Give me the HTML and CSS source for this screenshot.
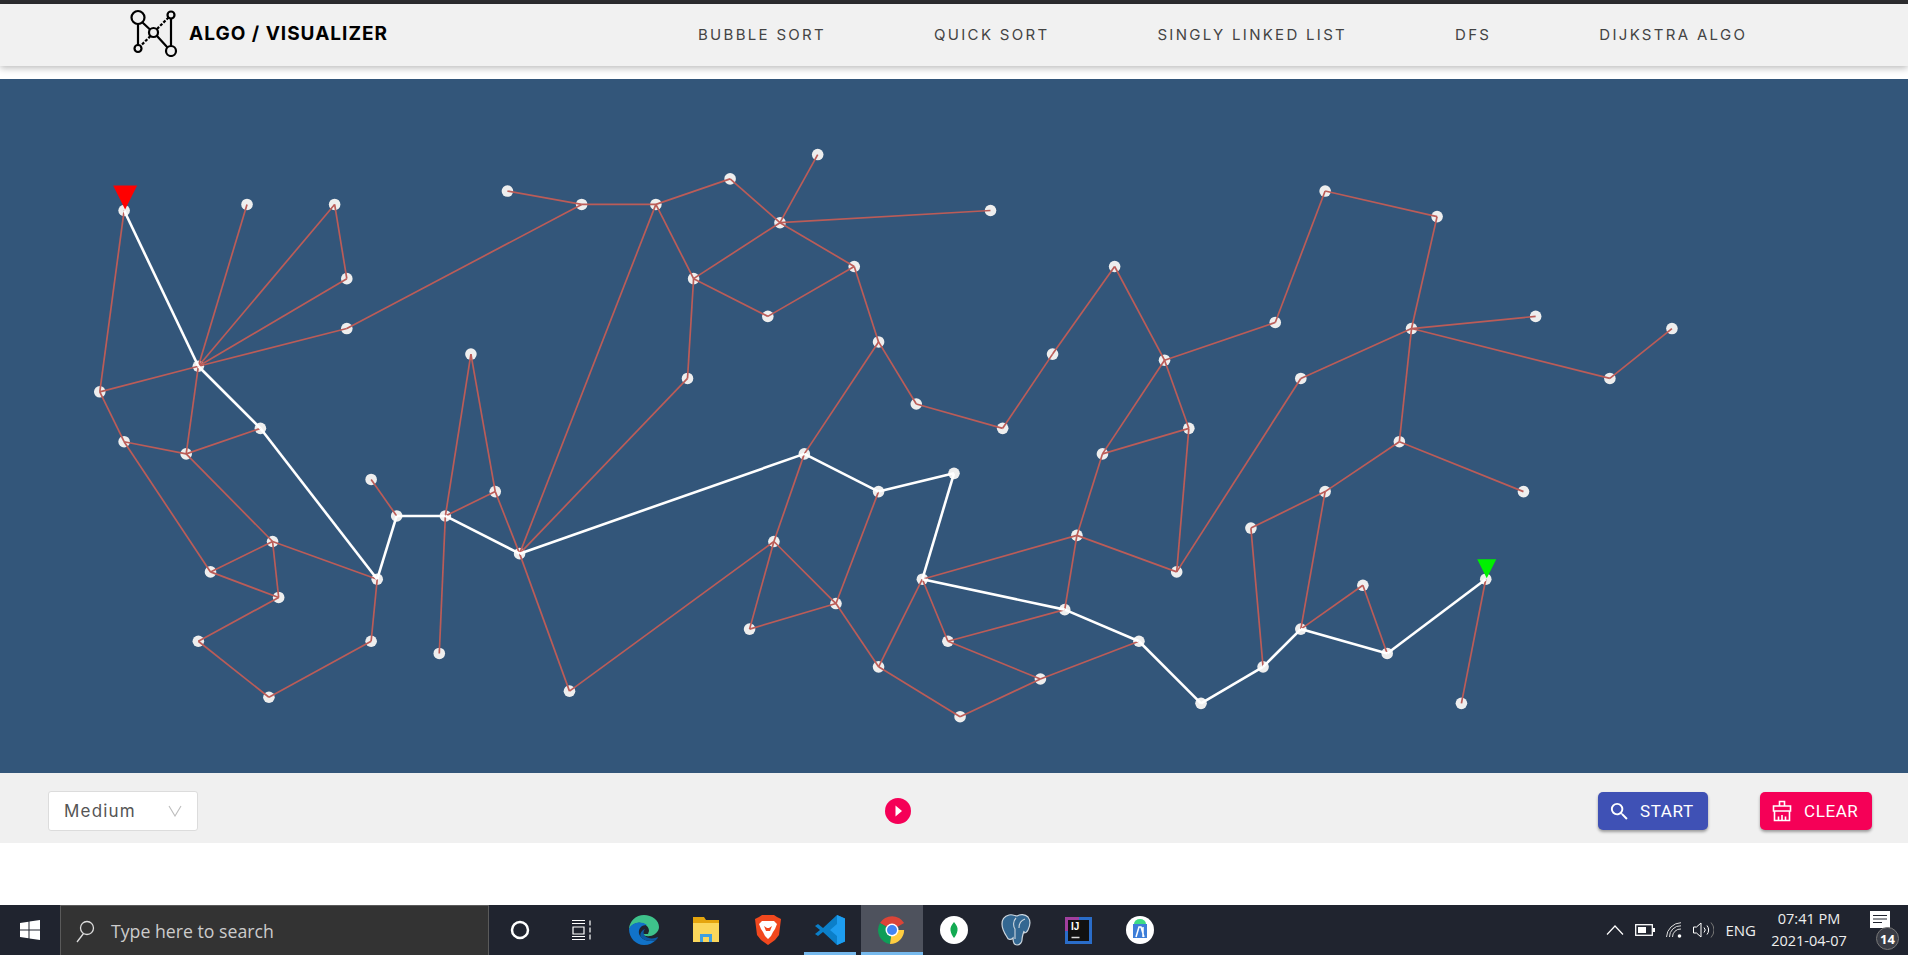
FILE: index.html
```html
<!DOCTYPE html>
<html lang="en">
<head>
    <meta charset="UTF-8">
    <title>Algo Visualizer</title>
    <link rel="stylesheet" href="styles.css">
</head>
<body>

<div class="top-strip"></div>

<!-- Header -->
<header class="header">
    <a class="brand">
        <svg class="brand-logo" width="48" height="48" viewBox="0 0 48 48" fill="none" stroke="#000" stroke-width="2.2">
            <circle cx="8" cy="8.500" r="6.500"/>
            <circle cx="41" cy="6" r="3.500"/>
            <circle cx="23.500" cy="23.500" r="4.500"/>
            <circle cx="8" cy="39.500" r="3.500"/>
            <circle cx="41" cy="42" r="5"/>
            <path d="M12.500 13.500L20 20.500M27 27L37.500 38.500M41 9.500V37M8 15V36"/>
            <path d="M27 20L38.500 8.500M20.500 27L10.500 37" stroke-dasharray="3 1.500"/>
        </svg>
        <span class="brand-name">ALGO / VISUALIZER</span>
    </a>
    <nav class="nav">
        <a>BUBBLE SORT</a>
        <a>QUICK SORT</a>
        <a>SINGLY LINKED LIST</a>
        <a>DFS</a>
        <a>DIJKSTRA ALGO</a>
    </nav>
</header>

<!-- Graph canvas, filled in by graph.js -->
<main class="canvas">
    <svg id="graph" class="graph" width="1908" height="694"></svg>
</main>

<!-- Controls -->
<div class="controls">
    <div class="speed-select">
        <span>Medium</span>
        <svg width="14" height="12" viewBox="0 0 14 12" fill="none" stroke="#bdbdbd" stroke-width="1.100"><path d="M1 1L7 11L13 1"/></svg>
    </div>
    <button class="play-btn">
        <svg width="26" height="26" viewBox="0 0 26 26"><circle cx="13" cy="13" r="13" fill="#f50057"/><path d="M10.500 7.500L17 13L10.500 18.500Z" fill="#fff"/></svg>
    </button>
    <button class="btn btn-start">
        <svg width="23" height="23" viewBox="0 0 24 24" fill="#fff"><path d="M15.500 14h-.79l-.28-.27A6.470 6.470 0 0 0 16 9.500 6.500 6.500 0 1 0 9.500 16c1.610 0 3.090-.59 4.230-1.570l.27.28v.79l5 4.990L20.490 19l-4.990-5zm-6 0C7.010 14 5 11.990 5 9.500S7.010 5 9.500 5 14 7.010 14 9.500 11.990 14 9.500 14z"/></svg>
        START
    </button>
    <button class="btn btn-clear">
        <svg width="22" height="22" viewBox="0 0 22 22" fill="none" stroke="#fff" stroke-width="1.600"><path d="M8.500 6V1.500h5V6M2.500 6h17v5h-17zM3.500 11v9.500h15V11M7.500 20.500v-4M11 20.500v-5.500M14.500 20.500v-4"/></svg>
        CLEAR
    </button>
</div>

<div class="spacer"></div>

<!-- Windows taskbar -->
<footer class="taskbar">
    <div class="start-slot">
        <svg width="20" height="20" viewBox="0 0 20 20" fill="#fff"><path d="M0 3l8.500-1.300v7.800H0zM9.500 1.500L20 0v9.500H9.500zM0 10.500h8.500v7.800L0 17zM9.500 10.500H20V20L9.500 18.500z"/></svg>
    </div>
    <div class="search-box">
        <svg width="20" height="24" viewBox="0 0 20 24" fill="none" stroke="#ddd" stroke-width="1.300"><circle cx="12" cy="9" r="6.500"/><path d="M8.500 14.500L2 23"/></svg>
        <span>Type here to search</span>
    </div>
    <div class="slot">
        <svg width="20" height="20" viewBox="0 0 20 20" fill="none" stroke="#fff" stroke-width="2.500"><circle cx="10" cy="10" r="8"/></svg>
    </div>
    <div class="slot">
        <svg width="22" height="20" viewBox="0 0 22 20" fill="none" stroke="#fff" stroke-width="1.200"><path d="M1 .5h13M1 3.500h13M2 7h11v7H2zM1 16.500h13M1 19.500h13M19 .5v5M19 7.500v5M19 14.500v5"/></svg>
    </div>
    <div class="slot">
        <!-- edge -->
        <svg width="30" height="30" viewBox="0 0 30 30">
            <path d="M15 0C7 0 .5 6 0 14c3-5 8-7 12-6 5 1 8 4 8 8l-1 3h-6c3 3 9 3 13 0 3-2 4-5 4-7C30 5 23 0 15 0z" fill="#3ec28b"/>
            <path d="M0 14c0 9 7 16 15 16 5 0 9-2 12-5-5 2-12 1-15-3-3-3-3-8 1-11 2-1 4-1 5-1-6-5-16-2-18 4z" fill="#1173c9"/>
            <path d="M12 22c3 4 10 5 15 3 1-1 2-2 2-3-4 2-10 2-13-1-2-2-2-5 0-7-3 1-6 5-4 8z" fill="#0c59a4"/>
        </svg>
    </div>
    <div class="slot">
        <!-- explorer -->
        <svg width="28" height="28" viewBox="0 0 28 28">
            <path d="M1 1h11l2 3h13v22H1z" fill="#e5a50d"/>
            <path d="M1 7h26v19H1z" fill="#fbd75b"/>
            <path d="M8 18h12v8h-3v-5h-6v5H8z" fill="#3f9fe0"/>
        </svg>
    </div>
    <div class="slot">
        <!-- brave -->
        <svg width="26" height="30" viewBox="0 0 26 30">
            <path d="M7 0h12l3 2 4 2-1 8-1 8-4 5-7 5-7-5-4-5-1-8L0 4l4-2z" fill="#f1481e"/>
            <path d="M7 6h12l3 3-2 5-2 3-2 4-3 3-3-3-2-4-2-3-2-5z" fill="#fff"/>
            <path d="M9 11l3 2h2l3-2-2 5h-4z" fill="#f1481e"/>
        </svg>
    </div>
    <div class="slot slot-open">
        <!-- vs code -->
        <svg width="30" height="30" viewBox="0 0 30 30">
            <path d="M22 0l8 3.500v23L22 30 8 17l-5 4-3-2 5-4-5-4 3-2 5 4z" fill="#0b7fc9"/>
            <path d="M22 0l8 3.500v23L22 30V21l-7-6 7-6z" fill="#1d9df0"/>
        </svg>
    </div>
    <div class="slot slot-active">
        <!-- chrome -->
        <svg width="28" height="28" viewBox="0 0 28 28">
            <path d="M14 14L2 7a14 14 0 0 1 24.100 0z" fill="#db4437"/>
            <path d="M14 14l-2 14A14 14 0 0 1 2 7z" fill="#0f9d58"/>
            <path d="M14 14h12.100A14 14 0 0 1 12 28z" fill="#ffcd40"/>
            <circle cx="14" cy="14" r="6.500" fill="#fff"/>
            <circle cx="14" cy="14" r="5" fill="#4285f4"/>
        </svg>
    </div>
    <div class="slot">
        <!-- mongodb compass -->
        <svg width="28" height="28" viewBox="0 0 28 28">
            <circle cx="14" cy="14" r="14" fill="#fff"/>
            <path d="M14 6c2.500 3 4 5.500 3.500 8.500C17 18 15.500 20 14 22c-1.500-2-3-4-3.500-7.500C10 11.500 11.500 9 14 6z" fill="#13aa52"/>
        </svg>
    </div>
    <div class="slot">
        <!-- postgres -->
        <svg width="30" height="32" viewBox="0 0 30 32">
            <path d="M8 1c4-1 6 1 8 1 3-2 8-2 11 1 3 4 2 9 0 13-1 2-2 3-4 3v-2c-1 3-2 7-2 9s-2 5-5 5-4-3-4-7c-2 2-5 2-6-1C4 20 1 15 1 10 1 5 4 2 8 1z" fill="#336791" stroke="#ccd6de" stroke-width="1.200"/>
            <path d="M15 4c-3 3-3 8-1 11v10M24 5c-3 1-6 4-6 9" fill="none" stroke="#ccd6de" stroke-width="1.100"/>
        </svg>
    </div>
    <div class="slot">
        <!-- intellij -->
        <svg width="27" height="27" viewBox="0 0 27 27">
            <rect width="27" height="27" fill="#2a6dc9"/>
            <path d="M0 0h14v3H3v11H0z" fill="#a13f9e"/>
            <rect x="3" y="3" width="21" height="21" fill="#111"/>
            <path d="M6.500 20.500h8" stroke="#ddd" stroke-width="1.500"/>
            <text x="6" y="13" class="ij-label">IJ</text>
        </svg>
    </div>
    <div class="slot">
        <!-- android studio -->
        <svg width="28" height="28" viewBox="0 0 28 28">
            <circle cx="14" cy="14" r="14" fill="#fff"/>
            <path d="M7 8h14v14H7z" fill="#3d7ed8"/>
            <path d="M8 8a6 5 0 0 1 12 0z" fill="#3ddc84"/>
            <path d="M10 21l3-10h2l3 10M17 11v10" fill="none" stroke="#fff" stroke-width="1.500"/>
        </svg>
    </div>

    <div class="tray">
        <svg class="tray-chevron" width="18" height="10" viewBox="0 0 18 10" fill="none" stroke="#fff" stroke-width="1.200"><path d="M1 9.500L9 1l8 8.500"/></svg>
        <svg width="20" height="12" viewBox="0 0 20 12"><rect x=".7" y=".7" width="16.600" height="10.600" fill="none" stroke="#fff" stroke-width="1.300"/><rect x="3" y="3" width="8" height="6" fill="#fff"/><rect x="18" y="4" width="2" height="4" fill="#fff"/></svg>
        <svg width="16" height="16" viewBox="0 0 16 16" fill="none" stroke="#ddd" stroke-width="1"><path d="M.5 15A15 15 0 0 1 15 .7M3.500 15A11 11 0 0 1 15 3.800M6.500 15A8 8 0 0 1 15 7"/><circle cx="13.500" cy="14" r="1.800" fill="#fff" stroke="none"/></svg>
        <svg width="21" height="16" viewBox="0 0 21 16" fill="none" stroke="#fff" stroke-width="1"><path d="M.5 5h3L8 1v14l-4.500-4h-3zM11 5.500a3.500 3.500 0 0 1 0 5M14 3.500a7 7 0 0 1 0 9"/><path d="M18 .5a11 11 0 0 1 0 15" stroke="#777"/></svg>
        <span class="tray-lang">ENG</span>
        <div class="clock">
            <span>07:41 PM</span>
            <span>2021-04-07</span>
        </div>
        <div class="notify">
            <svg width="20" height="17" viewBox="0 0 20 17"><path d="M0 0h20v17H0z" fill="#fff"/><path d="M3 4.500h14M3 8h14M3 11.500h9" stroke="#20242f" stroke-width="1"/></svg>
            <span class="notify-badge">14</span>
        </div>
    </div>
</footer>

<script src="graph.js"></script>
</body>
</html>
```

FILE: styles.css
```css
* {
    box-sizing: border-box;
}
html, body {
    margin: 0;
    height: 955px;
    overflow: hidden;
    background: #fff;
}
body {
    display: flex;
    flex-direction: column;
    font-family: "Inter", Arial, sans-serif;
}
.top-strip {
    height: 4px;
    background: #2d2d30;
    flex: none;
}
.header {
    height: 62px;
    flex: none;
    display: flex;
    align-items: center;
    padding-left: 130px;
    background: #f1f1f1;
    box-shadow: 0 2px 7px rgba(0, 0, 0, 0.28);
    position: relative;
}
.brand {
    display: flex;
    align-items: center;
    gap: 11px;
    width: 568px;
    margin-top: -4px;
}
.brand-name {
    font-size: 19px;
    font-weight: 700;
    color: #000;
    letter-spacing: 1px;
    white-space: nowrap;
}
.nav {
    display: flex;
    gap: 108px;
    margin-top: -2px;
}
.nav a {
    font-size: 15px;
    color: #444;
    letter-spacing: 2.300px;
    white-space: nowrap;
}
.canvas {
    margin-top: 13px;
    height: 694px;
    flex: none;
    background: #33567a;
}
.graph {
    display: block;
}
.edge {
    stroke: #bb5c58;
    stroke-width: 1.700;
}
.edge-path {
    stroke: #fff;
    stroke-width: 2.600;
}
.node {
    fill: #eeeeee;
}
.marker-start {
    fill: #ff0000;
}
.marker-end {
    fill: #00f000;
}
.controls {
    height: 70px;
    flex: none;
    display: flex;
    align-items: center;
    padding: 6px 36px 0 48px;
    background: #f0f0f0;
}
.speed-select {
    width: 150px;
    height: 40px;
    display: flex;
    align-items: center;
    justify-content: space-between;
    padding: 0 15px;
    background: #fff;
    border: 1px solid #dcdcdc;
    border-radius: 3px;
    font-size: 17px;
    letter-spacing: 1.200px;
    color: #555;
}
.play-btn {
    margin-left: 687px;
    padding: 0;
    border: none;
    background: none;
    display: flex;
}
.btn {
    height: 38px;
    display: flex;
    align-items: center;
    border: none;
    border-radius: 5px;
    color: #fff;
    font-family: "Roboto", Arial, sans-serif;
    font-size: 17px;
    letter-spacing: 0.600px;
    box-shadow: 0 2px 3px rgba(0, 0, 0, 0.35);
}
.btn-start {
    width: 110px;
    margin-left: auto;
    padding-left: 10px;
    gap: 9px;
    background: #3f51b5;
}
.btn-clear {
    width: 112px;
    margin-left: 52px;
    padding-left: 11px;
    gap: 11px;
    background: #f50057;
}
.spacer {
    height: 62px;
    flex: none;
}
.taskbar {
    height: 50px;
    flex: none;
    display: flex;
    align-items: stretch;
    background: #20242f;
    color: #fff;
    font-family: "Open Sans", Arial, sans-serif;
}
.start-slot {
    width: 60px;
    display: flex;
    align-items: center;
    justify-content: center;
}
.search-box {
    width: 429px;
    display: flex;
    align-items: center;
    gap: 16px;
    padding-left: 14px;
    background: #333;
    border: 1px solid #5a5a5a;
    border-bottom: none;
    font-size: 17.700px;
    color: #ccc;
}
.slot {
    width: 62px;
    display: flex;
    align-items: center;
    justify-content: center;
    position: relative;
}
.slot-open::after, .slot-active::after {
    content: "";
    position: absolute;
    bottom: 0;
    height: 3px;
    background: #76b9ed;
}
.slot-open::after {
    left: 5px;
    right: 5px;
}
.slot-active {
    background: #4e525d;
}
.slot-active::after {
    left: 0;
    right: 0;
}
.ij-label {
    font-family: "Liberation Sans", sans-serif;
    font-size: 10px;
    font-weight: 700;
    fill: #fff;
}
.tray {
    margin-left: auto;
    display: flex;
    align-items: center;
    padding-right: 10px;
}
.tray svg {
    flex: none;
}
.tray > svg {
    margin-right: 11px;
}
.tray-lang {
    font-size: 15px;
    color: #eee;
}
.clock {
    width: 106px;
    display: flex;
    flex-direction: column;
    align-items: center;
    font-size: 14.500px;
    line-height: 22px;
    color: #eee;
}
.notify {
    width: 30px;
    height: 40px;
    margin-left: 6px;
    position: relative;
    padding-top: 1px;
    padding-left: 2px;
}
.notify-badge {
    position: absolute;
    left: 8px;
    top: 17px;
    width: 23px;
    height: 23px;
    border-radius: 50%;
    background: #3a3d46;
    border: 1px solid #777;
    display: flex;
    align-items: center;
    justify-content: center;
    font-size: 13px;
    font-weight: 700;
}
```

FILE: graph.js
```js
// Node positions were read off at 1568 wide, so scale them up to the real canvas
const SCALE = 1908 / 1568;
const CANVAS_TOP = 79;

const nodes = {
    a: [102, 173], b: [203, 168], c: [275, 168], d: [285, 229], e: [285, 270],
    f: [163, 301], g: [82, 322], h: [102, 363], i: [153, 373], j: [214, 352],
    k: [224, 445], l: [173, 470], m: [229, 491], n: [163, 527], o: [221, 573],
    p: [305, 527], q: [310, 476], r: [305, 394], s: [326, 424], t: [366, 424],
    u: [361, 537], v: [387, 291], w: [407, 404], x: [427, 455], y: [468, 568],
    z: [417, 157], aa: [478, 168], ab: [539, 168], ac: [600, 147], ad: [672, 127],
    ae: [641, 183], af: [814, 173], ag: [570, 229], ah: [631, 260], ai: [702, 219],
    aj: [722, 281], ak: [565, 311], al: [753, 332], am: [824, 352], an: [865, 291],
    ao: [916, 219], ap: [957, 296], aq: [1048, 265], ar: [1089, 157], as: [1181, 178],
    at: [1160, 270], au: [1262, 260], av: [1323, 311], aw: [1374, 270], ax: [1069, 311],
    ay: [1150, 363], az: [1252, 404], ba: [1089, 404], bb: [1028, 434], bc: [1038, 548],
    bd: [1069, 517], be: [1120, 481], bf: [1140, 537], bg: [1221, 476], bh: [1201, 578],
    bi: [987, 578], bj: [936, 527], bk: [875, 501], bl: [855, 558], bm: [789, 589],
    bn: [722, 548], bo: [779, 527], bp: [758, 476], bq: [784, 389], br: [722, 404],
    bs: [661, 373], bt: [636, 445], bu: [687, 496], bv: [616, 517], bw: [885, 440],
    bx: [906, 373], by: [977, 352], bz: [967, 470]
};

const edges = 'a-g f-b f-c c-d f-d f-e e-aa f-g f-i g-h h-i i-j h-l i-k k-l l-m k-m k-q m-n n-o o-p p-q ' +
    'r-s t-v t-u v-w t-w w-x x-ab x-ak x-y y-bt z-aa aa-ab ab-ac ac-ae ad-ae ae-af ae-ag ab-ag ag-ah ' +
    'ah-ai ae-ai ai-aj ag-ak aj-bs aj-al al-am am-an an-ao ao-ap ap-aq aq-ar ar-as as-at at-au at-av ' +
    'av-aw at-ax at-ay ax-bz ay-az ay-ba ba-bb ba-bd bb-bc bd-be be-bf bg-bh ap-bx ap-by bx-by by-bz ' +
    'bx-bw bw-bz bw-bp bw-bk bp-bo bo-bk bo-bl bl-bj bl-bm bm-bn bn-bp bn-bu bu-bt bt-bs bt-bv bv-bu bu-br';

const path = ['a', 'f', 'j', 'q', 's', 't', 'x', 'bs', 'br', 'bq', 'bp', 'bk', 'bj', 'bi', 'bc', 'bd', 'bf', 'bg'];

const svg = document.getElementById('graph');

function pos(id) {
    return [nodes[id][0] * SCALE, nodes[id][1] * SCALE - CANVAS_TOP];
}

function add(tag, attrs) {
    const el = document.createElementNS('http://www.w3.org/2000/svg', tag);
    Object.keys(attrs).forEach(key => el.setAttribute(key, attrs[key]));
    svg.appendChild(el);
}

function addLine(from, to, cls) {
    const [x1, y1] = pos(from);
    const [x2, y2] = pos(to);
    add('line', { x1, y1, x2, y2, class: cls });
}

Object.keys(nodes).forEach(id => {
    const [cx, cy] = pos(id);
    add('circle', { cx, cy, r: 5.8, class: 'node' });
});

edges.split(' ').forEach(pair => {
    const [from, to] = pair.split('-');
    addLine(from, to, 'edge');
});

path.slice(1).forEach((id, i) => addLine(path[i], id, 'edge-path'));

// Start and end markers sit on top of their nodes
function addMarker(id, size, cls) {
    const [x, y] = pos(id);
    const tip = y - 1;
    add('polygon', {
        points: `${x - size / 2 + 1},${tip - size} ${x + size / 2 + 1},${tip - size} ${x + 1},${tip}`,
        class: cls
    });
}

addMarker('a', 24, 'marker-start');
addMarker('bg', 19, 'marker-end');
```
